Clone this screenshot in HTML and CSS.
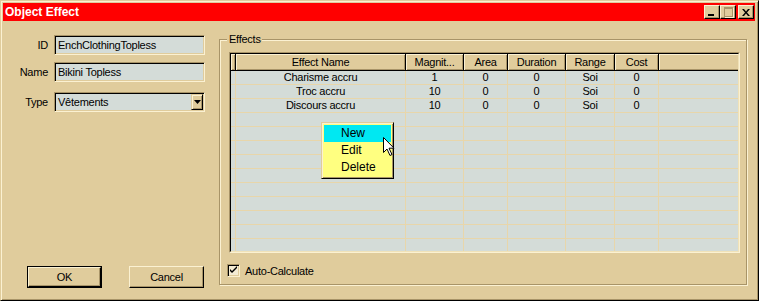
FILE: index.html
```html
<!DOCTYPE html>
<html lang="en">

<head>
    <meta charset="UTF-8">
    <title>Object Effect</title>
    <link rel="stylesheet" href="styles.css">
</head>

<body>
    <div class="window">
        <div class="titlebar">
            <span class="title">Object Effect</span>
            <div class="caption-buttons">
                <div class="cap"><span class="min-glyph"></span></div>
                <div class="cap"><span class="max-glyph"></span></div>
                <div class="cap close">
                    <svg width="8" height="7" viewBox="0 0 8 7">
                        <path d="M0 0h2l2 2.5 2-2.5h2l-3 3.5 3 3.5h-2l-2-2.5-2 2.5h-2l3-3.5z" fill="#000"/>
                    </svg>
                </div>
            </div>
        </div>

        <div class="client">
            <div class="side">
                <div class="field">
                    <label>ID</label>
                    <div class="edit">EnchClothingTopless</div>
                </div>
                <div class="field">
                    <label>Name</label>
                    <div class="edit">Bikini Topless</div>
                </div>
                <div class="field field-type">
                    <label>Type</label>
                    <div class="edit combo">
                        <span class="combo-text">Vêtements</span>
                        <span class="drop-btn">
                            <svg width="7" height="4" viewBox="0 0 7 4"><path d="M0 0h7l-3.5 4z" fill="#000"/></svg>
                        </span>
                    </div>
                </div>

                <div class="actions">
                    <div class="btn default"><span>OK</span></div>
                    <div class="btn"><span>Cancel</span></div>
                </div>
            </div>

            <div class="group">
                <span class="legend">Effects</span>

                <div class="list">
                    <div class="list-view">
                        <table class="effects">
                            <colgroup>
                                <col style="width:5px">
                                <col style="width:170px">
                                <col style="width:58px">
                                <col style="width:44px">
                                <col style="width:58px">
                                <col style="width:49px">
                                <col style="width:44px">
                                <col>
                            </colgroup>
                            <thead>
                                <tr>
                                    <th></th>
                                    <th>Effect Name</th>
                                    <th>Magnit...</th>
                                    <th>Area</th>
                                    <th>Duration</th>
                                    <th>Range</th>
                                    <th>Cost</th>
                                    <th></th>
                                </tr>
                            </thead>
                            <tbody>
                                <tr><td></td><td>Charisme accru</td><td>1</td><td>0</td><td>0</td><td>Soi</td><td>0</td><td></td></tr>
                                <tr><td></td><td>Troc accru</td><td>10</td><td>0</td><td>0</td><td>Soi</td><td>0</td><td></td></tr>
                                <tr><td></td><td>Discours accru</td><td>10</td><td>0</td><td>0</td><td>Soi</td><td>0</td><td></td></tr>
                                <tr><td></td><td></td><td></td><td></td><td></td><td></td><td></td><td></td></tr>
                                <tr><td></td><td></td><td></td><td></td><td></td><td></td><td></td><td></td></tr>
                                <tr><td></td><td></td><td></td><td></td><td></td><td></td><td></td><td></td></tr>
                                <tr><td></td><td></td><td></td><td></td><td></td><td></td><td></td><td></td></tr>
                                <tr><td></td><td></td><td></td><td></td><td></td><td></td><td></td><td></td></tr>
                                <tr><td></td><td></td><td></td><td></td><td></td><td></td><td></td><td></td></tr>
                                <tr><td></td><td></td><td></td><td></td><td></td><td></td><td></td><td></td></tr>
                                <tr><td></td><td></td><td></td><td></td><td></td><td></td><td></td><td></td></tr>
                                <tr><td></td><td></td><td></td><td></td><td></td><td></td><td></td><td></td></tr>
                                <tr><td></td><td></td><td></td><td></td><td></td><td></td><td></td><td></td></tr>
                            </tbody>
                        </table>
                    </div>

                    <div class="menu">
                        <div class="menu-item active">New</div>
                        <div class="menu-item">Edit</div>
                        <div class="menu-item">Delete</div>
                    </div>

                    <svg class="pointer" width="12" height="19" viewBox="0 0 12 19">
                        <path d="M0.5 0.5v15l3.5-3.5 3 6.5 2-1-3-6.3h5z" fill="#fff" stroke="#000" stroke-width="1"/>
                    </svg>
                </div>

                <label class="check">
                    <span class="check-box">
                        <svg width="9" height="9" viewBox="0 0 9 9"><path d="M1 3l2 2 5-5v2l-5 5-2-2z" fill="#000"/></svg>
                    </span>
                    Auto-Calculate
                </label>
            </div>
        </div>
    </div>
</body>

</html>
```

FILE: styles.css
```css
body {
    margin: 0;
    padding: 0;
    background: #000;
    font-family: "Liberation Sans", Arial, sans-serif;
    font-size: 11px;
    letter-spacing: -0.25px;
    color: #000;
}

.window {
    width: 759px;
    height: 301px;
    box-sizing: border-box;
    background: #e0cc9c;
    border: 1px solid;
    border-color: #e0cc9c #000 #000 #e0cc9c;
    box-shadow: inset 1px 1px 0 #fbf1d2, inset -1px -1px 0 #a89468;
    padding: 2px;
    display: flex;
    flex-direction: column;
}

/* title bar */
.titlebar {
    height: 18px;
    background: #ff0000;
    display: flex;
    align-items: center;
    justify-content: space-between;
    padding-left: 2px;
    margin-right: 1px;
}

.title {
    color: #fff;
    font-weight: bold;
    font-size: 12px;
    letter-spacing: 0;
}

.caption-buttons {
    display: flex;
    margin-right: 1px;
}

.cap {
    width: 16px;
    height: 14px;
    box-sizing: border-box;
    background: #e0cc9c;
    border: 1px solid;
    border-color: #fbf1d2 #000 #000 #fbf1d2;
    box-shadow: inset -1px -1px 0 #a89468;
    position: relative;
}

.cap.close {
    margin-left: 2px;
    display: flex;
    align-items: center;
    justify-content: center;
}

.min-glyph {
    position: absolute;
    left: 3px;
    bottom: 2px;
    width: 6px;
    height: 2px;
    background: #000;
}

.max-glyph {
    position: absolute;
    left: 3px;
    top: 1px;
    width: 7px;
    height: 7px;
    border: 1px solid #a89468;
    border-top-width: 2px;
    box-shadow: 1px 1px 0 #fbf1d2;
}

/* client area */
.client {
    flex: 1;
    display: flex;
}

.side {
    width: 216px;
    display: flex;
    flex-direction: column;
    padding-top: 14px;
    padding-bottom: 10px;
    box-sizing: border-box;
}

.field {
    display: flex;
    align-items: center;
    margin-bottom: 7px;
}

.field-type {
    margin-top: 3px;
}

.field label {
    width: 45px;
    text-align: right;
    margin-right: 6px;
}

.edit {
    width: 151px;
    height: 20px;
    box-sizing: border-box;
    background: #d4dcd8;
    border: 1px solid;
    border-color: #a89468 #fbf1d2 #fbf1d2 #a89468;
    box-shadow: inset 1px 1px 0 #000, inset -1px -1px 0 #e0cc9c;
    padding: 0 3px;
    line-height: 18px;
}

.combo {
    display: flex;
    align-items: center;
    padding-right: 1px;
}

.combo-text {
    flex: 1;
}

.drop-btn {
    width: 12px;
    height: 16px;
    box-sizing: border-box;
    background: #e0cc9c;
    border: 1px solid;
    border-color: #e0cc9c #000 #000 #e0cc9c;
    box-shadow: inset 1px 1px 0 #fbf1d2, inset -1px -1px 0 #a89468;
    display: flex;
    align-items: center;
    justify-content: center;
}

.actions {
    margin-top: auto;
    display: flex;
    gap: 27px;
    padding-left: 24px;
}

.btn {
    width: 75px;
    height: 22px;
    box-sizing: border-box;
    border: 1px solid;
    border-color: #fbf1d2 #000 #000 #fbf1d2;
    box-shadow: inset -1px -1px 0 #a89468;
    display: flex;
    align-items: center;
    justify-content: center;
}

.btn.default {
    border: 1px solid #000;
}

.btn.default span {
    display: flex;
    align-items: center;
    justify-content: center;
    width: 100%;
    height: 100%;
    box-sizing: border-box;
    border: 1px solid;
    border-color: #fbf1d2 #000 #000 #fbf1d2;
    box-shadow: inset -1px -1px 0 #a89468;
}

/* effects group */
.group {
    flex: 1;
    position: relative;
    margin: 18px 9px 13px 0;
    border: 1px solid #a89468;
    box-shadow: inset 1px 1px 0 #fbf1d2, 1px 1px 0 #fbf1d2;
    padding: 12px 6px 0 9px;
    display: flex;
    flex-direction: column;
}

.legend {
    position: absolute;
    top: -7px;
    left: 7px;
    padding: 0 1px 0 2px;
    background: #e0cc9c;
    line-height: 13px;
}

.list {
    position: relative;
    height: 201px;
    box-sizing: border-box;
    border: 1px solid;
    border-color: #a89468 #fbf1d2 #fbf1d2 #a89468;
}

.list-view {
    height: 100%;
    box-sizing: border-box;
    border: 1px solid;
    border-color: #000 #f0e2b8 #f0e2b8 #000;
    background: #d4dcd8;
    overflow: hidden;
}

.effects {
    width: 100%;
    table-layout: fixed;
    border-collapse: separate;
    border-spacing: 0;
}

.effects th {
    height: 17px;
    padding: 0;
    box-sizing: border-box;
    font-weight: normal;
    background: #e0cc9c;
    border-right: 1px solid #000;
    border-bottom: 1px solid #000;
    box-shadow: inset 1px 1px 0 #fbf1d2, inset -1px -1px 0 #a89468;
    white-space: nowrap;
    overflow: hidden;
}

.effects th:last-child {
    border-right: none;
    box-shadow: inset 1px 1px 0 #fbf1d2, inset 0 -1px 0 #a89468;
}

.effects td {
    height: 14px;
    padding: 0;
    box-sizing: border-box;
    line-height: 13px;
    text-align: center;
    border-right: 1px solid #e8d6aa;
    border-bottom: 1px solid #e8d6aa;
    white-space: nowrap;
    overflow: hidden;
}

.effects td:last-child {
    border-right: none;
}

/* context menu */
.menu {
    position: absolute;
    left: 91px;
    top: 69px;
    width: 73px;
    box-sizing: border-box;
    background: #ffff80;
    border: 1px solid;
    border-color: #e0cc9c #000 #000 #e0cc9c;
    box-shadow: inset 1px 1px 0 #fbf1d2, inset -1px -1px 0 #a89468;
    padding: 2px;
}

.menu-item {
    height: 17px;
    line-height: 17px;
    padding-left: 17px;
    font-size: 12px;
    letter-spacing: 0;
}

.menu-item.active {
    background: #00e8f2;
}

.pointer {
    position: absolute;
    left: 153px;
    top: 84px;
}

/* checkbox */
.check {
    display: flex;
    align-items: center;
    gap: 5px;
    margin: 11px 0 0 -2px;
}

.check-box {
    width: 13px;
    height: 13px;
    box-sizing: border-box;
    background: #f4ecd4;
    border: 1px solid;
    border-color: #a89468 #fbf1d2 #fbf1d2 #a89468;
    box-shadow: inset 1px 1px 0 #000, inset -1px -1px 0 #e0cc9c;
    display: flex;
    align-items: center;
    justify-content: center;
}
```
